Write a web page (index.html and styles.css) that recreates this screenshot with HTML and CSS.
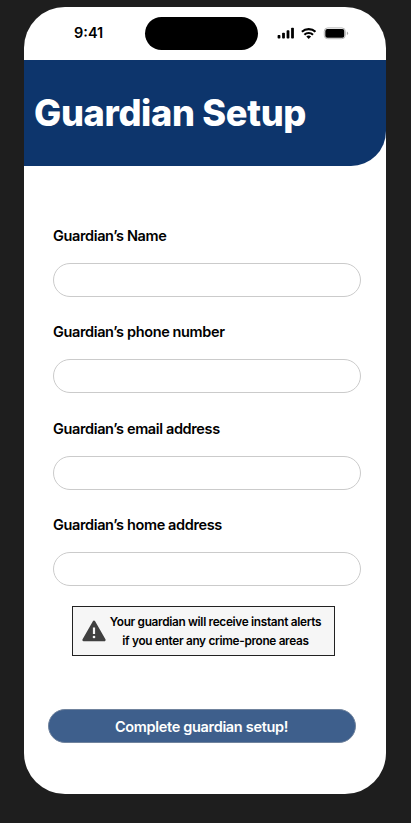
FILE: index.html
```html
<!DOCTYPE html>
<html lang="en">
<head>
<meta charset="utf-8">
<title>Guardian Setup</title>
<link rel="stylesheet" href="styles.css">
</head>
<body>
<main class="phone">
  <div class="status">
    <span class="time">9:41</span>
    <span class="island"></span>
    <svg class="indicators" width="72" height="14" viewBox="0 0 72 14">
      <rect x="0.6" y="8" width="2.8" height="3.6" rx="0.8"/>
      <rect x="5.1" y="5.7" width="2.8" height="5.9" rx="0.8"/>
      <rect x="9.6" y="3.2" width="2.8" height="8.4" rx="0.8"/>
      <rect x="14.1" y="0.8" width="2.8" height="10.8" rx="0.8"/>
      <g fill="none" stroke="#000" stroke-width="2.2">
        <path d="M24.9 4.8a10.1 10.1 0 0 1 13.6 0"/>
        <path d="M27.4 7.7a6.3 6.3 0 0 1 8.6 0"/>
      </g>
      <path d="M31.7 12 29.3 9.6a3.5 3.5 0 0 1 4.8 0z"/>
      <rect x="47.3" y="0.9" width="21" height="10.8" rx="3.4" fill="none" stroke="#b5b5b5"/>
      <rect x="48.3" y="1.9" width="19" height="8.8" rx="2"/>
      <path d="M69.9 4.5v3.7q1.2-.6 1.2-1.85t-1.2-1.85z" fill="#aaa"/>
    </svg>
  </div>
  <header class="banner"><h1>Guardian Setup</h1></header>
  <form class="form">
    <label class="field"><span class="label">Guardian’s Name</span><input type="text"></label>
    <label class="field"><span class="label">Guardian’s phone number</span><input type="text"></label>
    <label class="field"><span class="label">Guardian’s email address</span><input type="text"></label>
    <label class="field"><span class="label">Guardian’s home address</span><input type="text"></label>
    <div class="notice">
      <svg class="warning" width="24" height="22" viewBox="0 0 24 22">
        <path d="M12 1.8 22.3 20H1.7z" fill="#404040" stroke="#404040" stroke-width="2.6" stroke-linejoin="round"/>
        <path d="M12 7.6v6.4" stroke="#f5f5f5" stroke-width="2.2"/>
        <circle cx="12" cy="17" r="1.3" fill="#f5f5f5"/>
      </svg>
      <p>Your guardian will receive instant alerts<br>if you enter any crime-prone areas</p>
    </div>
    <button class="submit" type="button">Complete guardian setup!</button>
  </form>
</main>
</body>
</html>
```
FILE: styles.css
```css
* { box-sizing: border-box; }
body {
  margin: 0;
  height: 823px;
  padding: 6.8px 24.6px 0 24px;
  background: #1e1e1e;
  font-family: Inter, sans-serif;
  color: #000;
  overflow: hidden;
}
.phone {
  height: 787.4px;
  background: #fff;
  border-radius: 41px;
  overflow: hidden;
}
.status {
  height: 53.2px;
  display: flex;
  align-items: center;
}
.time {
  width: 71px;
  margin-left: 50px;
  font-size: 14.5px;
  font-weight: 600;
  line-height: 18px;
}
.island {
  width: 112.5px;
  height: 33.6px;
  border-radius: 17px;
  background: #000;
}
.indicators { margin: 2px 0 0 19.5px; }
.banner {
  height: 106.3px;
  padding: 30px 0 0 10px;
  background: #0d356c;
  border-bottom-right-radius: 35px;
}
h1 {
  margin: 0;
  color: #fff;
  font-size: 36.2px;
  font-weight: 800;
  line-height: 46px;
  letter-spacing: -0.33px;
  white-space: nowrap;
}
.form { padding: 60.8px 0 0 29px; }
.field { display: block; height: 96.35px; }
.label {
  display: block;
  height: 35.8px;
  font-size: 14.5px;
  font-weight: 600;
  line-height: 18px;
  letter-spacing: -0.37px;
}
.field input {
  display: block;
  width: 308px;
  height: 34px;
  padding: 0 16px;
  border: 1px solid #cbcbcb;
  border-radius: 17px;
  background: #fff;
  font: inherit;
}
.notice {
  width: 263px;
  height: 50px;
  margin: -6.2px 0 0 19px;
  display: flex;
  align-items: center;
  border: 1px solid #222;
  background: #f6f6f6;
}
.warning { margin-left: 9px; flex: none; }
.notice p {
  width: 219px;
  margin: 0;
  padding-top: 1px;
  font-size: 11.8px;
  font-weight: 600;
  line-height: 19px;
  letter-spacing: -0.31px;
  text-align: center;
  white-space: nowrap;
}
.submit {
  display: block;
  width: 308px;
  height: 34px;
  margin: 52.8px 0 0 -5px;
  padding: 2px 1px 0 0;
  border: 1px solid #70839d;
  border-radius: 17px;
  background: #3e5f8c;
  color: #fff;
  font: 600 14.5px/18px Inter, sans-serif;
  letter-spacing: -0.32px;
}
```
